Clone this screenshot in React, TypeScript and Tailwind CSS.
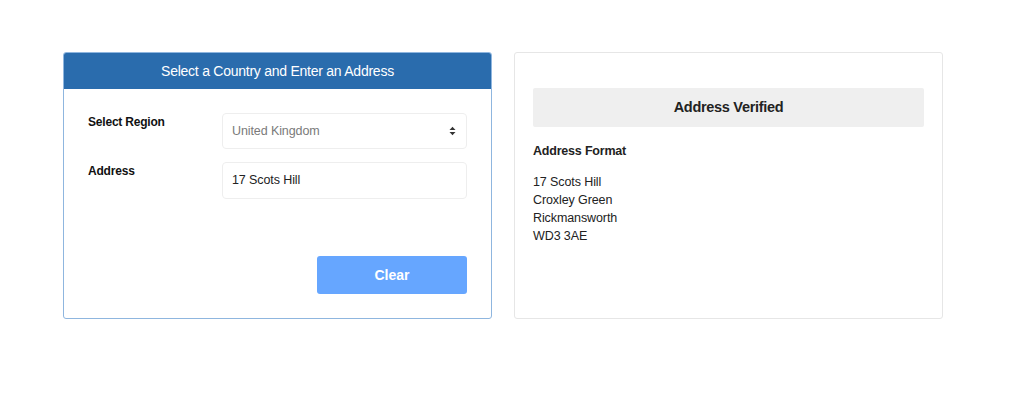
import React from "react";

export default function App() {
  return (
    <div
      className="w-[1024px] h-[398px] bg-white"
      style={{ fontFamily: '"Liberation Sans", Arial, sans-serif' }}
    >
      <div className="flex gap-[22px] pl-[63px] pt-[52px]">
        <div className="w-[429px] h-[267px] border border-[#8fb6df] rounded-[3px] flex flex-col overflow-hidden">
          <div className="h-[36px] bg-[#2a6cad] text-white text-[14px] tracking-[-0.25px] flex items-center justify-center">
            Select a Country and Enter an Address
          </div>
          <div className="flex-1 flex flex-col px-[24px] pt-[24px] pb-[24px]">
            <div className="flex">
              <div className="w-[134px] pt-[0px] text-[12px] tracking-[-0.2px] font-bold text-[#111]">Select Region</div>
              <div className="w-[245px] h-[36px] border border-[#eeeeee] rounded-[4px] flex items-center justify-between pl-[9px] pr-[10px] text-[12.5px] tracking-[-0.1px] text-[#7a7a7a]">
                <span>United Kingdom</span>
                <svg width="7" height="10" viewBox="0 0 7 10">
                  <path d="M0.5 4 L3.5 0.8 L6.5 4 Z" fill="#333" />
                  <path d="M0.5 6 L3.5 9.2 L6.5 6 Z" fill="#333" />
                </svg>
              </div>
            </div>
            <div className="flex mt-[13px]">
              <div className="w-[134px] pt-[0px] text-[12px] tracking-[-0.2px] font-bold text-[#111]">Address</div>
              <div className="w-[245px] h-[37px] border border-[#eeeeee] rounded-[4px] flex items-center pl-[9px] text-[12.5px] tracking-[-0.1px] text-[#222]">
                17 Scots Hill
              </div>
            </div>
            <div className="flex-1" />
            <div className="flex justify-end">
              <button className="w-[150px] h-[38px] bg-[#66a6ff] rounded-[3px] text-white font-bold text-[14px]">
                Clear
              </button>
            </div>
          </div>
        </div>
        <div className="w-[429px] h-[267px] border border-[#e6e6e6] rounded-[3px] px-[18px] pt-[35px]">
          <div className="h-[39px] bg-[#efefef] rounded-[2px] flex items-center justify-center text-[14.5px] tracking-[-0.3px] font-bold text-[#222]">
            Address Verified
          </div>
          <div className="mt-[15px] text-[12.5px] tracking-[-0.2px] font-bold text-[#222]">Address Format</div>
          <div className="mt-[12px] text-[12.5px] tracking-[-0.1px] leading-[18px] text-[#222]">
            <div>17 Scots Hill</div>
            <div>Croxley Green</div>
            <div>Rickmansworth</div>
            <div>WD3 3AE</div>
          </div>
        </div>
      </div>
    </div>
  );
}
